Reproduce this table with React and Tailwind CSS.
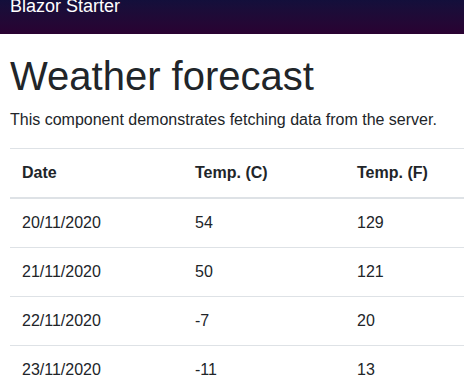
import React from 'react';

const forecasts = [
  { date: '20/11/2020', c: 54, f: 129 },
  { date: '21/11/2020', c: 50, f: 121 },
  { date: '22/11/2020', c: -7, f: 20 },
  { date: '23/11/2020', c: -11, f: 13 },
];

export default function App() {
  return (
    <div className="h-[376px] overflow-hidden bg-white font-['Liberation_Sans',Arial,sans-serif] text-[#212529]">
      {/* top bar */}
      <div className="h-[34px] overflow-hidden bg-gradient-to-b from-[#130f3b] to-[#2a0232] px-[10px]">
        <div className="-mt-[3px] text-[18px] leading-none text-white">Blazor Starter</div>
      </div>

      <div className="pl-[10px] pt-[18px]">
        <h1 className="mb-2 text-[40px] leading-[1.2] font-normal">Weather forecast</h1>
        <p className="mb-4 text-[16px] leading-6">This component demonstrates fetching data from the server.</p>

        <table className="w-full border-collapse text-left text-[16px] leading-6">
          <thead>
            <tr>
              <th className="w-[173px] border-t border-b-2 border-[#dee2e6] p-3 font-bold">Date</th>
              <th className="w-[162px] border-t border-b-2 border-[#dee2e6] p-3 font-bold">Temp. (C)</th>
              <th className="border-t border-b-2 border-[#dee2e6] p-3 font-bold">Temp. (F)</th>
            </tr>
          </thead>
          <tbody>
            {forecasts.map((row) => (
              <tr key={row.date}>
                <td className="border-t border-[#dee2e6] p-3">{row.date}</td>
                <td className="border-t border-[#dee2e6] p-3">{row.c}</td>
                <td className="border-t border-[#dee2e6] p-3">{row.f}</td>
              </tr>
            ))}
          </tbody>
        </table>
      </div>
    </div>
  );
}
